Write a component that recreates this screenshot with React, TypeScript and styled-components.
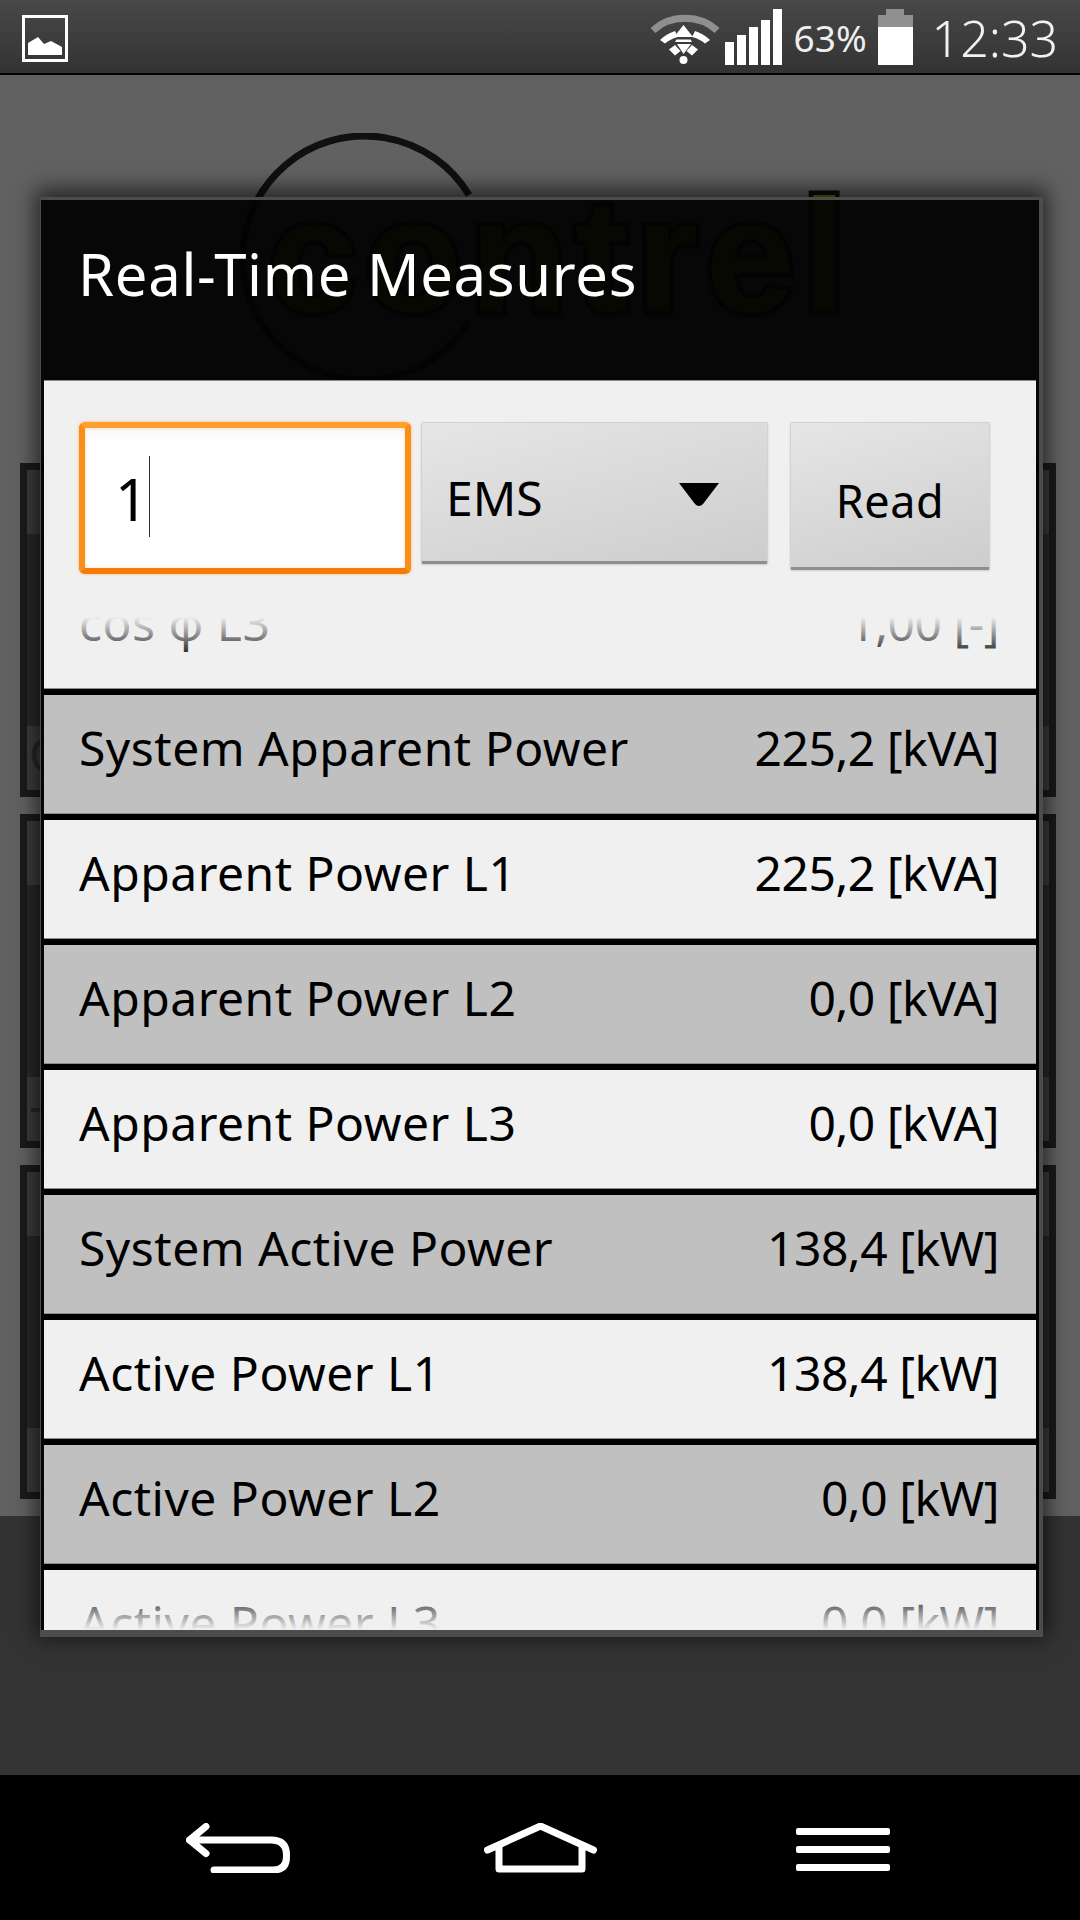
import React from 'react';
import styled, { createGlobalStyle } from 'styled-components';

const GlobalStyle = createGlobalStyle`
  html, body {
    margin: 0;
    padding: 0;
    background: #000;
  }
  * {
    box-sizing: border-box;
  }
`;

const FONT = `'Noto Sans', 'Open Sans', sans-serif`;

const Screen = styled.div`
  position: relative;
  width: 1080px;
  height: 1920px;
  display: flex;
  flex-direction: column;
  overflow: hidden;
  font-family: ${FONT};
`;

/* status bar */
const StatusBar = styled.div`
  height: 75px;
  flex: none;
  display: flex;
  align-items: flex-start;
  justify-content: space-between;
  background: linear-gradient(#484848, #333333);
  border-bottom: 2px solid #000;
`;

const StatusLeft = styled.div`
  padding: 15px 0 0 22px;
`;

const StatusRight = styled.div`
  display: flex;
  align-items: flex-start;
  padding: 9px 22px 0 0;
`;

const WifiSlot = styled.svg`
  margin-top: 1px;
  display: block;
`;

const SignalBars = styled.div`
  display: flex;
  align-items: flex-end;
  gap: 3px;
  height: 56px;
`;

const SignalBar = styled.div<{ $height: number }>`
  width: 9px;
  height: ${(p) => p.$height}px;
  background: #fff;
`;

const Percent = styled.div`
  width: 69px;
  margin: 5px 0 0 12px;
  font-size: 37px;
  line-height: 48px;
  color: #eee;
  white-space: nowrap;
`;

const Battery = styled.div`
  width: 35px;
  height: 56px;
  margin-left: 15px;
  display: flex;
  flex-direction: column;
  align-items: center;
`;

const BatteryCap = styled.div`
  width: 18px;
  height: 6px;
  background: #909090;
`;

const BatteryEmpty = styled.div`
  width: 100%;
  height: 12px;
  background: #909090;
`;

const BatteryFill = styled.div`
  width: 100%;
  flex: 1;
  background: #fff;
`;

const Clock = styled.div`
  margin: -1px 0 0 19px;
  font-size: 50px;
  line-height: 60px;
  font-weight: 350;
  color: #f2f2f2;
  white-space: nowrap;
`;

/* what is dimmed behind the dialog */
const Backdrop = styled.div`
  flex: 1;
  display: flex;
  flex-direction: column;
  background: #616161;
`;

const LogoArea = styled.div`
  height: 388px;
  flex: none;
  padding: 58px 0 0 238px;
`;

const Logo = styled.div`
  position: relative;
  width: 640px;
  height: 250px;
`;

const LogoWord = styled.div`
  position: absolute;
  left: 30px;
  top: 28px;
  font-family: 'Liberation Sans', Arial, sans-serif;
  font-weight: 700;
  font-size: 160px;
  line-height: 190px;
  letter-spacing: 7.5px;
  color: #6a6a00;
  -webkit-text-stroke: 9px #0c0c0c;
  paint-order: stroke fill;
`;

const Groups = styled.div`
  display: flex;
  flex-direction: column;
  gap: 17px;
  padding: 0 24px 0 20px;
`;

const Group = styled.div`
  height: 334px;
  display: flex;
  flex-direction: column;
  border: 7px solid #1a1a1a;
  overflow: hidden;
`;

const GroupBand = styled.div<{ $dark?: boolean }>`
  height: ${(p) => (p.$dark ? 192 : 64)}px;
  padding-left: 2px;
  background: ${(p) => (p.$dark ? '#282828' : '#3c3c3c')};
  font-size: 48px;
  line-height: 56px;
  color: #262626;
`;

const BackdropFoot = styled.div`
  flex: 1;
  margin-top: 17px;
  background: #333;
`;

/* dialog */
const Dialog = styled.div`
  position: absolute;
  left: 40px;
  top: 197px;
  width: 1003px;
  height: 1440px;
  display: flex;
  flex-direction: column;
  padding: 0 3px;
  background: rgba(3, 3, 3, 0.952);
  border-style: solid;
  border-color: #4c4c4c;
  border-width: 3px 4px 7px 1px;
  box-shadow: 0 -4px 20px 4px rgba(0, 0, 0, 0.62);
`;

const DialogTitle = styled.div`
  height: 181px;
  flex: none;
  padding: 36px 0 0 34px;
  border-bottom: 1px solid #8a8a8a;
  font-size: 58px;
  line-height: 76px;
  letter-spacing: 0.7px;
  color: #fff;
`;

const DialogBody = styled.div`
  flex: 1;
  min-height: 0;
  display: flex;
  flex-direction: column;
  background: #f0f0f0;
`;

const Toolbar = styled.div`
  height: 236px;
  flex: none;
  display: flex;
  align-items: flex-start;
  padding: 41px 0 0 35px;
`;

const InputBox = styled.div`
  width: 332px;
  height: 152px;
  flex: none;
  display: flex;
  align-items: center;
  padding: 0 0 0 30px;
  border: 6px solid;
  border-color: #ff9f2c #f88f18 #f47b08;
  border-radius: 6px;
  background: linear-gradient(#f7f7f7, #ffffff 16px);
  font-size: 58px;
  color: #000;
  box-shadow: 0 0 3px rgba(255, 150, 40, 0.7), inset 0 0 3px rgba(255, 170, 90, 0.5);
`;

const Caret = styled.span`
  width: 1px;
  height: 81px;
  margin: -4px 0 0 1px;
  background: #333;
`;

const RaisedButton = styled.button<{ $width: number; $height: number; $gap: number }>`
  width: ${(p) => p.$width}px;
  height: ${(p) => p.$height}px;
  margin-left: ${(p) => p.$gap}px;
  flex: none;
  padding: 0;
  border: 1px solid #d2d2d2;
  border-bottom: 3px solid #8e8e8e;
  border-radius: 2px;
  background: linear-gradient(165deg, #e6e6e6, #cdcdcd);
  box-shadow: 0 1px 2px rgba(0, 0, 0, 0.15);
  font-family: ${FONT};
  color: #000;
`;

const SpinnerInner = styled.div`
  display: flex;
  align-items: center;
  justify-content: space-between;
  padding: 10px 48px 0 24px;
  font-size: 48px;
`;

const SpinnerArrowSlot = styled.svg`
  display: block;
  margin-top: -4px;
`;

const ReadLabel = styled.div`
  padding-top: 11px;
  font-size: 45px;
  letter-spacing: 0.5px;
`;

/* list */
const List = styled.div`
  position: relative;
  flex: 1;
  min-height: 0;
  overflow: hidden;
`;

const ListScroll = styled.div`
  display: flex;
  flex-direction: column;
  gap: 6px;
  margin-top: -47px;
  background: #000;
`;

const Row = styled.div<{ $shaded: boolean }>`
  height: 119px;
  flex: none;
  display: flex;
  align-items: center;
  justify-content: space-between;
  padding: 0 37px 14px 35px;
  background: ${(p) => (p.$shaded ? '#c0c0c0' : '#f0f0f0')};
  border-bottom: 1px solid #8c8c8c;
  font-size: 48px;
  color: #000;
  white-space: nowrap;
`;

const RowLabel = styled.span`
  letter-spacing: 0.5px;
`;

const RowValue = styled.span`
  letter-spacing: -0.5px;
`;

const FadeEdge = styled.div<{ $edge: 'top' | 'bottom' }>`
  position: absolute;
  left: 0;
  right: 0;
  height: 44px;
  ${(p) => (p.$edge === 'top' ? 'top: 0;' : 'bottom: 0;')}
  background: linear-gradient(
    ${(p) => (p.$edge === 'top' ? 'to bottom' : 'to top')},
    #f0f0f0,
    rgba(240, 240, 240, 0)
  );
`;

/* nav bar */
const NavBar = styled.div`
  height: 145px;
  flex: none;
  display: flex;
  align-items: flex-start;
  justify-content: center;
  gap: 194px;
  padding: 48px 4px 0 0;
  background: #000;
`;

const MenuIcon = styled.div`
  width: 94px;
  display: flex;
  flex-direction: column;
  gap: 11px;
  padding-top: 5px;
`;

const MenuLine = styled.div`
  height: 7px;
  border-radius: 2px;
  background: #fff;
`;

const GalleryIcon = () => (
  <svg width="46" height="47" viewBox="0 0 46 47" style={{ display: 'block' }}>
    <rect x="1.5" y="1.5" width="43" height="44" fill="none" stroke="#fff" strokeWidth="3" />
    <path d="M6 40V28L16 22L22 29L29 26L40 32V40Z" fill="#fff" />
  </svg>
);

const WifiIcon = () => (
  <WifiSlot width="80" height="60" viewBox="0 0 80 60">
    <path d="M8 20.5C25 4 55 4 72 20.5" fill="none" stroke="#8f8f8f" strokeWidth="7" />
    <path d="M15 30C19 26 24 23 30 21L33 27C28 28 23 31 20 33.5Z" fill="#fff" />
    <path d="M65 30C61 26 56 23 50 21L47 27C52 28 57 31 60 33.5Z" fill="#fff" />
    <path d="M38.5 15L29 27H48Z" fill="#fff" />
    <path d="M31.5 29.5H45.5L47 32H30Z" fill="#fff" />
    <path d="M32 34H46L38.5 44Z" fill="#fff" />
    <path d="M24 39.5L30 35L35.5 41L30 45.5Z" fill="#fff" />
    <path d="M53 39.5L47 35L41.5 41L47 45.5Z" fill="#fff" />
    <circle cx="38.5" cy="50" r="4" fill="#fff" />
  </WifiSlot>
);

const SpinnerArrow = () => (
  <SpinnerArrowSlot width="40" height="24" viewBox="0 0 40 24">
    <path d="M0 0H40L24 21Q20 25 16 21Z" fill="#000" />
  </SpinnerArrowSlot>
);

const LogoRing = () => (
  <svg width="250" height="250" viewBox="0 0 250 250" style={{ display: 'block' }}>
    <path d="M231 62A122 122 0 1 0 231 188" fill="none" stroke="#101010" strokeWidth="7" />
  </svg>
);

const BackIcon = () => (
  <svg width="104" height="50" viewBox="0 0 104 50" style={{ display: 'block' }}>
    <path
      d="M20 3.500L3.500 17L20 30.500M3.500 17H85Q100.500 17 100.500 32V34Q100.500 47 87 47H28"
      fill="none"
      stroke="#fff"
      strokeWidth="7"
      strokeLinecap="round"
      strokeLinejoin="round"
    />
  </svg>
);

const HomeIcon = () => (
  <svg width="118" height="50" viewBox="0 0 118 50" style={{ display: 'block' }}>
    <path
      d="M3.500 27L56.500 3L109.500 27M15 22V46H98V22"
      fill="none"
      stroke="#fff"
      strokeWidth="7"
      strokeLinecap="round"
      strokeLinejoin="round"
    />
  </svg>
);

const SIGNAL = [23, 30, 38, 45, 56];

const MEASURES = [
  { label: 'cos φ L3', value: '1,00 [-]' },
  { label: 'System Apparent Power', value: '225,2 [kVA]' },
  { label: 'Apparent Power L1', value: '225,2 [kVA]' },
  { label: 'Apparent Power L2', value: '0,0 [kVA]' },
  { label: 'Apparent Power L3', value: '0,0 [kVA]' },
  { label: 'System Active Power', value: '138,4 [kW]' },
  { label: 'Active Power L1', value: '138,4 [kW]' },
  { label: 'Active Power L2', value: '0,0 [kW]' },
  { label: 'Active Power L3', value: '0,0 [kW]' }
];

const PEEKS = ['C', '-', ''];

const App = () => (
  <Screen>
    <GlobalStyle />
    <StatusBar>
      <StatusLeft>
        <GalleryIcon />
      </StatusLeft>
      <StatusRight>
        <WifiIcon />
        <SignalBars>
          {SIGNAL.map((h) => (
            <SignalBar key={h} $height={h} />
          ))}
        </SignalBars>
        <Percent>63%</Percent>
        <Battery>
          <BatteryCap />
          <BatteryEmpty />
          <BatteryFill />
        </Battery>
        <Clock>12:33</Clock>
      </StatusRight>
    </StatusBar>

    <Backdrop>
      <LogoArea>
        <Logo>
          <LogoRing />
          <LogoWord>contrel</LogoWord>
        </Logo>
      </LogoArea>
      <Groups>
        {PEEKS.map((peek, i) => (
          <Group key={i}>
            <GroupBand />
            <GroupBand $dark />
            <GroupBand>{peek}</GroupBand>
          </Group>
        ))}
      </Groups>
      <BackdropFoot />
    </Backdrop>

    <Dialog>
      <DialogTitle>Real-Time Measures</DialogTitle>
      <DialogBody>
        <Toolbar>
          <InputBox>
            1<Caret />
          </InputBox>
          <RaisedButton $width={347} $height={142} $gap={10}>
            <SpinnerInner>
              EMS
              <SpinnerArrow />
            </SpinnerInner>
          </RaisedButton>
          <RaisedButton $width={200} $height={148} $gap={22}>
            <ReadLabel>Read</ReadLabel>
          </RaisedButton>
        </Toolbar>
        <List>
          <ListScroll>
            {MEASURES.map((m, i) => (
              <Row key={m.label} $shaded={i % 2 === 1}>
                <RowLabel>{m.label}</RowLabel>
                <RowValue>{m.value}</RowValue>
              </Row>
            ))}
          </ListScroll>
          <FadeEdge $edge="top" />
          <FadeEdge $edge="bottom" />
        </List>
      </DialogBody>
    </Dialog>

    <NavBar>
      <BackIcon />
      <HomeIcon />
      <MenuIcon>
        <MenuLine />
        <MenuLine />
        <MenuLine />
      </MenuIcon>
    </NavBar>
  </Screen>
);

export default App;
